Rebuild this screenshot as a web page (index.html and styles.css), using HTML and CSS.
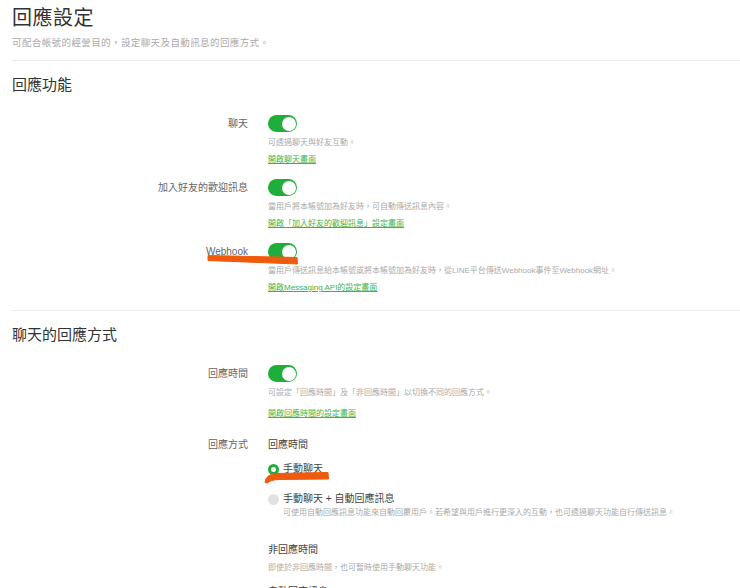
FILE: index.html
```html
<!DOCTYPE html>
<html lang="zh-Hant">
<head>
  <meta charset="UTF-8" />
  <title>回應設定</title>
  <link rel="stylesheet" href="styles.css">
</head>
<body>
  <div class="page">
    <h1 class="page-title">回應設定</h1>
    <p class="page-desc">可配合帳號的經營目的，設定聊天及自動訊息的回應方式。</p>

    <div class="section">
      <h2 class="section-title">回應功能</h2>

      <div class="row">
        <div class="row-label">聊天</div>
        <div class="row-body">
          <span class="toggle"><span class="knob"></span></span>
          <p class="hint">可透過聊天與好友互動。</p>
          <a class="link" href="#">開啟聊天畫面</a>
        </div>
      </div>

      <div class="row">
        <div class="row-label">加入好友的歡迎訊息</div>
        <div class="row-body">
          <span class="toggle"><span class="knob"></span></span>
          <p class="hint">當用戶將本帳號加為好友時，可自動傳送訊息內容。</p>
          <a class="link" href="#">開啟「加入好友的歡迎訊息」設定畫面</a>
        </div>
      </div>

      <div class="row">
        <div class="row-label">Webhook</div>
        <div class="row-body">
          <span class="toggle"><span class="knob"></span></span>
          <p class="hint">當用戶傳送訊息給本帳號或將本帳號加為好友時，從LINE平台傳送Webhook事件至Webhook網址。</p>
          <a class="link" href="#">開啟Messaging API的設定畫面</a>
        </div>
      </div>
    </div>

    <div class="section">
      <h2 class="section-title">聊天的回應方式</h2>

      <div class="row">
        <div class="row-label">回應時間</div>
        <div class="row-body">
          <span class="toggle"><span class="knob"></span></span>
          <p class="hint">可設定「回應時間」及「非回應時間」以切換不同的回應方式。</p>
          <a class="link link-far" href="#">開啟回應時間的設定畫面</a>
        </div>
      </div>

      <div class="row row-mode">
        <div class="row-label">回應方式</div>
        <div class="row-body">
          <div class="mode-title">回應時間</div>
          <div class="option first">
            <span class="radio checked"></span>手動聊天
          </div>
          <div class="option">
            <span class="radio"></span>手動聊天 + 自動回應訊息
          </div>
          <p class="option-hint">可使用自動回應訊息功能來自動回覆用戶。若希望與用戶進行更深入的互動，也可透過聊天功能自行傳送訊息。</p>

          <div class="mode-title off">非回應時間</div>
          <p class="hint">即使於非回應時間，也可暫時使用手動聊天功能。</p>
          <div class="mode-title next">自動回應訊息</div>
        </div>
      </div>
    </div>
  </div>

  <!-- 標註用的橘色筆跡 -->
  <svg class="marks" width="740" height="588" viewBox="0 0 740 588">
    <path d="M208 255.5 L297 257.5 L297.5 264 L208 260.5 Z" fill="#f05a0c" stroke="#f05a0c" stroke-width="1" stroke-linejoin="round"/>
    <path d="M265 482.5 Q265.5 474.5 276 473.5 L328 472.5 L328.5 479 L278 479.5 Q270 480 267.5 483 Z" fill="#f05a0c" stroke="#f05a0c" stroke-width="1" stroke-linejoin="round"/>
  </svg>
</body>
</html>
```

FILE: styles.css
```css
body {
  margin: 0;
  font-family: "Liberation Sans", "Noto Sans CJK TC", sans-serif;
  background: #fff;
  color: #333;
  position: relative;
  overflow: hidden;
}
.page {
  padding-left: 12px;
}
.page-title {
  margin: 6px 0 0;
  font-size: 20px;
  line-height: 24px;
  font-weight: normal;
  color: #333;
  letter-spacing: 0.5px;
}
.page-desc {
  margin: 6px 0 0;
  font-size: 9.5px;
  line-height: 14px;
  color: #aaa;
  letter-spacing: 0.4px;
}
.section {
  margin-top: 10px;
  border-top: 1px solid #ececec;
  padding-bottom: 15px;
}
.section + .section {
  margin-top: 0;
}
.section-title {
  margin: 14px 0 20px;
  font-size: 15px;
  line-height: 20px;
  font-weight: normal;
  color: #333;
}
.row {
  display: grid;
  grid-template-columns: 236px 1fr;
  column-gap: 20px;
  margin-bottom: 12px;
}
.row:last-child {
  margin-bottom: 0;
}
.row-label {
  text-align: right;
  font-size: 10px;
  line-height: 17px;
  color: #666;
}
.row-body {
  font-size: 8px;
}
.toggle {
  display: flex;
  justify-content: flex-end;
  align-items: center;
  box-sizing: border-box;
  width: 29px;
  height: 17px;
  padding: 0 1.5px;
  border-radius: 9px;
  background: #1fae3b;
}
.knob {
  width: 14px;
  height: 14px;
  border-radius: 50%;
  background: #fff;
}
.hint {
  margin: 4px 0 0;
  font-size: 8px;
  line-height: 14px;
  color: #aaa;
}
.link {
  display: inline-block;
  margin-top: 3px;
  font-size: 8px;
  line-height: 14px;
  color: #3ab54a;
  text-decoration: underline;
}
.link-far {
  margin-top: 7px;
}
.row-mode {
  margin-top: 16px;
}
.row-mode .row-label {
  line-height: 16px;
}
.mode-title {
  font-size: 10px;
  line-height: 16px;
  color: #444;
}
.mode-title.off {
  margin-top: 23px;
}
.mode-title.next {
  margin-top: 9px;
}
.row-mode .hint {
  margin-top: 3px;
}
.option {
  display: flex;
  align-items: center;
  margin-top: 14px;
  font-size: 10px;
  line-height: 16px;
  color: #444;
}
.option.first {
  margin-top: 8px;
}
.radio {
  box-sizing: border-box;
  width: 11px;
  height: 11px;
  margin-right: 4px;
  border-radius: 50%;
  background: #e2e2e2;
}
.radio.checked {
  background: #fff;
  border: 3px solid #1fae3b;
}
.option-hint {
  margin: 0;
  padding-left: 15px;
  font-size: 8px;
  line-height: 12px;
  color: #aaa;
}
.marks {
  position: absolute;
  top: 0;
  left: 0;
  pointer-events: none;
}
```
